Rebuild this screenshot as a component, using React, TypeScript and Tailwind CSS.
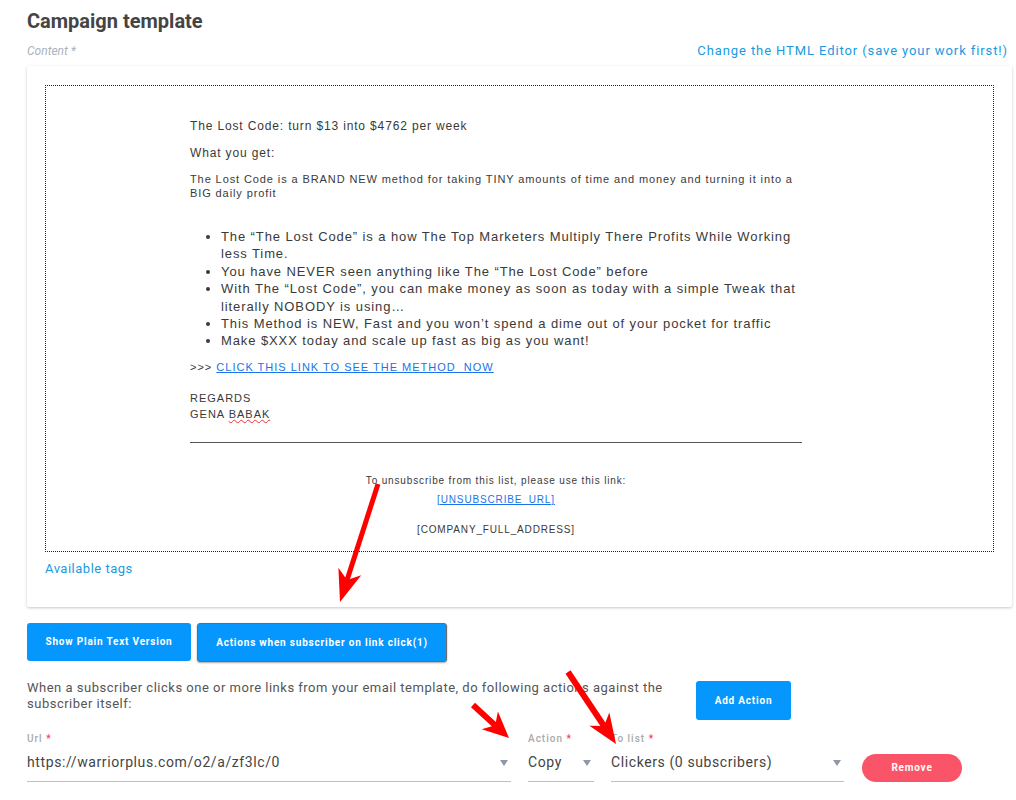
import React from "react";

type Pt = [number, number];

// red annotation arrow drawn over the screenshot
function Arrow({ from, to, w = 6, head = 30, spread = 12 }: { from: Pt; to: Pt; w?: number; head?: number; spread?: number }) {
  const dx = to[0] - from[0];
  const dy = to[1] - from[1];
  const len = Math.hypot(dx, dy);
  const ux = dx / len;
  const uy = dy / len;
  const px = -uy;
  const py = ux;
  const bx = to[0] - head * ux;
  const by = to[1] - head * uy;
  const nx = to[0] - head * 0.72 * ux;
  const ny = to[1] - head * 0.72 * uy;
  const pts = [
    `${to[0]},${to[1]}`,
    `${bx + spread * px},${by + spread * py}`,
    `${nx},${ny}`,
    `${bx - spread * px},${by - spread * py}`,
  ].join(" ");
  return (
    <g>
      <line x1={from[0]} y1={from[1]} x2={nx} y2={ny} stroke="#ff0000" strokeWidth={w} />
      <polygon points={pts} fill="#ff0000" />
    </g>
  );
}

function Caret() {
  return (
    <svg width="8" height="6" viewBox="0 0 8 6" className="shrink-0">
      <path d="M0 0 L8 0 L4 6 Z" fill="#8f98a8" />
    </svg>
  );
}

function Field(props: { label: string; value: string; width: string }) {
  return (
    <div className={`flex flex-col ${props.width}`}>
      <div className="text-[10px] font-medium leading-[14px] tracking-[1px] text-[#aaa]">
        {props.label} <span className="text-[#f0445a]">*</span>
      </div>
      <div className="mt-[1px] flex h-[35px] items-center justify-between border-b border-[#bfbfbf] pb-[2px] pr-[3px]">
        <span className="text-[14px] tracking-[0.6px] text-[#444]">{props.value}</span>
        <Caret />
      </div>
    </div>
  );
}

const bullets = [
  "The \u201CThe Lost Code\u201D is a how The Top Marketers Multiply There Profits While Working less Time.",
  "You have NEVER seen anything like The \u201CThe Lost Code\u201D before",
  "With The \u201CLost Code\u201D, you can make money as soon as today with a simple Tweak that literally NOBODY is using\u2026",
  "This Method is NEW, Fast and you won\u2019t spend a dime out of your pocket for traffic",
  "Make $XXX today and scale up fast as big as you want!",
];

export default function App() {
  return (
    <div className="relative min-h-screen bg-white pl-[27px] pr-[4px] pt-[7px] font-['Roboto',sans-serif]">
      <h1 className="text-[20px] font-bold leading-[28px] text-[#444]">Campaign template</h1>

      <div className="mt-[8px] flex items-end justify-between">
        <span className="text-[12px] italic leading-[16px] text-[#aab2c2]">Content *</span>
        <span className="pr-[4px] text-[13px] leading-[16px] tracking-[0.9px] text-[#1a9ae0]">
          Change the HTML Editor (save your work first!)
        </span>
      </div>

      <section className="mt-[7px] rounded-[2px] bg-white px-[18px] pb-[29px] pt-[19px] shadow-[0_1px_3px_rgba(0,0,0,0.22)]">
        <div className="border border-dotted border-[#222] pb-[14px] pt-[32px] font-['Liberation_Sans',Arial,sans-serif] text-[#3a3a3a]">
          <div className="ml-[144px] w-[612px]">
            <p className="text-[12px] leading-[16px] tracking-[0.85px]">The Lost Code: turn $13 into $4762 per week</p>
            <p className="mt-[11px] text-[12px] leading-[16px] tracking-[0.85px]">What you get:</p>
            <p className="mt-[11px] text-[11px] leading-[14px] tracking-[0.9px]">
              The Lost Code is a BRAND NEW method for taking TINY amounts of time and money and turning it into a BIG daily
              profit
            </p>
            <ul className="mt-[28px] list-disc pl-[31px] text-[13px] leading-[17.4px] tracking-[0.9px]">
              {bullets.map((b) => (
                <li key={b}>{b}</li>
              ))}
            </ul>
            <p className="mt-[10px] text-[11px] leading-[14px] tracking-[1px]">
              &gt;&gt;&gt;{" "}
              <span className="text-[#1a73e8] underline">CLICK THIS LINK TO SEE THE METHOD&nbsp; NOW</span>
            </p>
            <p className="mt-[16px] text-[11px] leading-[16px] tracking-[1px]">
              REGARDS
              <br />
              GENA <span className="underline decoration-[#e33] decoration-wavy decoration-[1px]">BABAK</span>
            </p>
            <div className="mt-[20px] border-t border-[#555]" />
            <div className="text-center text-[10px] leading-[14px] tracking-[0.85px]">
              <p className="mt-[31px]">To unsubscribe from this list, please use this link:</p>
              <p className="mt-[5px] text-[#1a73e8] underline">[UNSUBSCRIBE_URL]</p>
              <p className="mt-[16px]">[COMPANY_FULL_ADDRESS]</p>
            </div>
          </div>
        </div>
        <div className="mt-[8px] text-[13px] leading-[18px] tracking-[0.5px] text-[#1a9ae0]">Available tags</div>
      </section>

      <div className="mt-[16px] flex gap-[6px]">
        <button className="h-[38px] w-[164px] rounded-[3px] bg-[#0697fe] text-[10px] font-bold tracking-[0.8px] text-white">
          Show Plain Text Version
        </button>
        <button className="h-[39px] w-[250px] rounded-[3px] border border-[#6b6b6b] bg-[#0697fe] text-[10px] font-bold tracking-[0.8px] text-white shadow-[0_1px_2px_rgba(0,0,0,0.35)]">
          Actions when subscriber on link click(1)
        </button>
      </div>

      <div className="mt-[18px] flex items-start gap-[9px]">
        <p className="w-[660px] text-[13px] leading-[16px] tracking-[0.5px] text-[#555]">
          When a subscriber clicks one or more links from your email template, do following actions against the subscriber
          itself:
        </p>
        <button className="mt-[1px] h-[39px] w-[95px] rounded-[3px] bg-[#0697fe] text-[10px] font-bold tracking-[0.8px] text-white">
          Add Action
        </button>
      </div>

      <div className="mt-[12px] flex items-end gap-[17px]">
        <Field label="Url" value="https://warriorplus.com/o2/a/zf3lc/0" width="w-[484px]" />
        <Field label="Action" value="Copy" width="w-[66px]" />
        <Field label="To list" value="Clickers (0 subscribers)" width="w-[233px]" />
        <button className="ml-[1px] h-[28px] w-[100px] rounded-full bg-[#fa5468] text-[10px] font-bold tracking-[0.8px] text-white">
          Remove
        </button>
      </div>

      <svg className="pointer-events-none absolute left-0 top-0" width="1016" height="800">
        <Arrow from={[378, 484]} to={[340, 602]} w={5} head={32} spread={12} />
        <Arrow from={[473, 705]} to={[509, 738]} w={6} head={26} spread={12} />
        <Arrow from={[568, 672]} to={[616, 744]} w={6} head={30} spread={12} />
      </svg>
    </div>
  );
}
